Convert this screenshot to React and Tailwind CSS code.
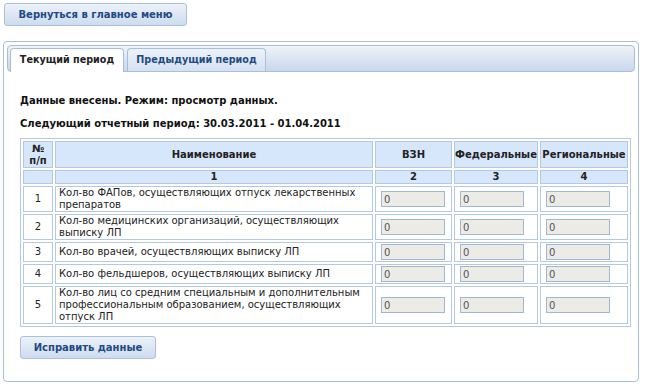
import React from 'react';

const rows = [
  { n: 1, name: 'Кол-во ФАПов, осуществляющих отпуск лекарственных препаратов' },
  { n: 2, name: 'Кол-во медицинских организаций, осуществляющих выписку ЛП' },
  { n: 3, name: 'Кол-во врачей, осуществляющих выписку ЛП' },
  { n: 4, name: 'Кол-во фельдшеров, осуществляющих выписку ЛП' },
  { n: 5, name: 'Кол-во лиц со средним специальным и дополнительным профессиональным образованием, осуществляющих отпуск ЛП' },
];

const btn =
  'h-[23px] px-[10px] whitespace-nowrap rounded-[3px] border border-[#a9c1df] bg-linear-to-b from-[#edf2f9] to-[#cddcef] text-[10px] font-bold text-[#1e4a86] leading-none';

const th = 'border border-[#b3c8e3] bg-[#d7e7fb] font-bold text-[10px] text-[#222] text-center leading-[12px] whitespace-nowrap p-0';
const td = 'border border-[#b3c8e3] bg-white text-[#222] leading-[12px] px-[3px] py-0';

const Cell = () => (
  <td className={`${td} px-[5px] py-[1px] align-middle`}>
    <input
      readOnly
      value="0"
      className="block w-[64px] h-[16px] border border-[#a0b7d4] bg-[#ecebe5] text-[10px] text-[#555] px-[2px] outline-none"
    />
  </td>
);

export default function App() {
  return (
    <div className="w-[650px] h-[388px] bg-white font-['DejaVu_Sans',Verdana,sans-serif] text-[10px] text-black pt-[3px] px-[3px]">
      <button className={`${btn} w-[183px] ml-[1px]`}>Вернуться в главное меню</button>

      <div className="mt-[15px] w-[636px] h-[341px] border border-[#a7bfdd] rounded-[4px] p-[3px]">
        {/* tabs */}
        <div className="h-[27px] border border-[#a7bfdd] rounded-[4px] bg-linear-to-b from-[#eef2f9] to-[#c9d8ec] flex items-end pl-[2px] gap-[3px]">
          <div className="h-[24px] w-[114px] -mb-[1px] border border-b-0 border-[#a7bfdd] rounded-t-[4px] bg-white flex items-center justify-center font-bold text-[9.6px] whitespace-nowrap text-[#222]">
            Текущий период
          </div>
          <div className="h-[23px] w-[139px] border border-b-0 border-[#a7bfdd] rounded-t-[4px] bg-linear-to-b from-[#eef2f9] to-[#d5e1f1] flex items-center justify-center font-bold text-[9.6px] whitespace-nowrap text-[#1e4a86]">
            Предыдущий период
          </div>
        </div>

        <div className="px-[13px]">
          <p className="mt-[22px] font-bold text-[10px] leading-[13px] text-[#111]">Данные внесены. Режим: просмотр данных.</p>
          <p className="mt-[10px] font-bold text-[10px] leading-[13px] text-[#111]">Следующий отчетный период: 30.03.2011 - 01.04.2011</p>

          <table className="mt-[8px] w-[611px] table-fixed border-separate border-spacing-[2px] border border-[#b3c8e3]">
            <colgroup>
              <col className="w-[30px]" />
              <col />
              <col className="w-[77px]" />
              <col className="w-[84px]" />
              <col className="w-[88px]" />
            </colgroup>
            <thead>
              <tr className="h-[27px]">
                <th className={th}>№<br />п/п</th>
                <th className={th}>Наименование</th>
                <th className={th}>ВЗН</th>
                <th className={th}>Федеральные</th>
                <th className={th}>Региональные</th>
              </tr>
              <tr className="h-[13px]">
                <th className={th}></th>
                <th className={th}>1</th>
                <th className={th}>2</th>
                <th className={th}>3</th>
                <th className={th}>4</th>
              </tr>
            </thead>
            <tbody>
              {rows.map((r) => (
                <tr key={r.n}>
                  <td className={`${td} text-center`}>{r.n}</td>
                  <td className={td}>{r.name}</td>
                  <Cell />
                  <Cell />
                  <Cell />
                </tr>
              ))}
            </tbody>
          </table>

          <button className={`${btn} mt-[9px] w-[136px]`}>Исправить данные</button>
        </div>
      </div>
    </div>
  );
}
